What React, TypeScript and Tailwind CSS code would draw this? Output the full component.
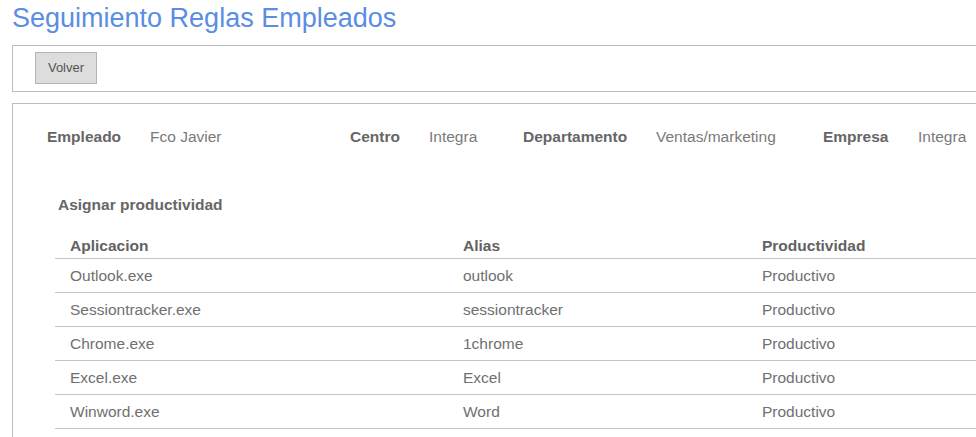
const info = [
  { label: 'Empleado', value: 'Fco Javier', lw: 'w-[103px]', vw: 'w-[200px]' },
  { label: 'Centro', value: 'Integra', lw: 'w-[79px]', vw: 'w-[94px]' },
  { label: 'Departamento', value: 'Ventas/marketing', lw: 'w-[133px]', vw: 'w-[167px]' },
  { label: 'Empresa', value: 'Integra', lw: 'w-[95px]', vw: 'w-[120px]' },
]

const rows = [
  { app: 'Outlook.exe', alias: 'outlook', prod: 'Productivo' },
  { app: 'Sessiontracker.exe', alias: 'sessiontracker', prod: 'Productivo' },
  { app: 'Chrome.exe', alias: '1chrome', prod: 'Productivo' },
  { app: 'Excel.exe', alias: 'Excel', prod: 'Productivo' },
  { app: 'Winword.exe', alias: 'Word', prod: 'Productivo' },
]

export default function App() {
  return (
    <div className="w-[976px] h-[437px] overflow-hidden bg-white font-['Liberation_Sans',Arial,sans-serif] text-[#666]">
      <div className="w-[1100px] pl-[12px]">
        <h1 className="text-[27px] leading-[36px] text-[#5a8de3] font-normal">Seguimiento Reglas Empleados</h1>

        <div className="mt-[9px] border border-[#bdbdbd] pl-[22px] pt-[6px] pb-[7px]">
          <button className="w-[62px] h-[32px] bg-[#dddddd] border border-[#b4b4b4] text-[13px] text-[#555]">
            Volver
          </button>
        </div>

        <div className="mt-[11px] border border-[#bdbdbd] pl-[34px] pt-[22px] h-[400px]">
          <div className="flex text-[15.5px] leading-[22px]">
            {info.map((i) => (
              <div key={i.label} className="flex">
                <span className={`${i.lw} font-bold text-[#666]`}>{i.label}</span>
                <span className={`${i.vw} text-[#7a7a7a]`}>{i.value}</span>
              </div>
            ))}
          </div>

          <div className="mt-[46px] pl-[11px] text-[15.5px] leading-[22px] font-bold text-[#666]">
            Asignar productividad
          </div>

          <div className="mt-[17px] ml-[8px] text-[15.5px]">
            <div className="flex items-center h-[26px] border-b border-[#c4c4c4] font-bold text-[#626262]">
              <div className="w-[393px] pl-[15px]">Aplicacion</div>
              <div className="w-[299px] pl-[15px]">Alias</div>
              <div className="pl-[15px]">Productividad</div>
            </div>
            {rows.map((r) => (
              <div key={r.app} className="flex items-center h-[34px] border-b border-[#c4c4c4] text-[#707070]">
                <div className="w-[393px] pl-[15px]">{r.app}</div>
                <div className="w-[299px] pl-[15px]">{r.alias}</div>
                <div className="pl-[15px]">{r.prod}</div>
              </div>
            ))}
          </div>
        </div>
      </div>
    </div>
  )
}
